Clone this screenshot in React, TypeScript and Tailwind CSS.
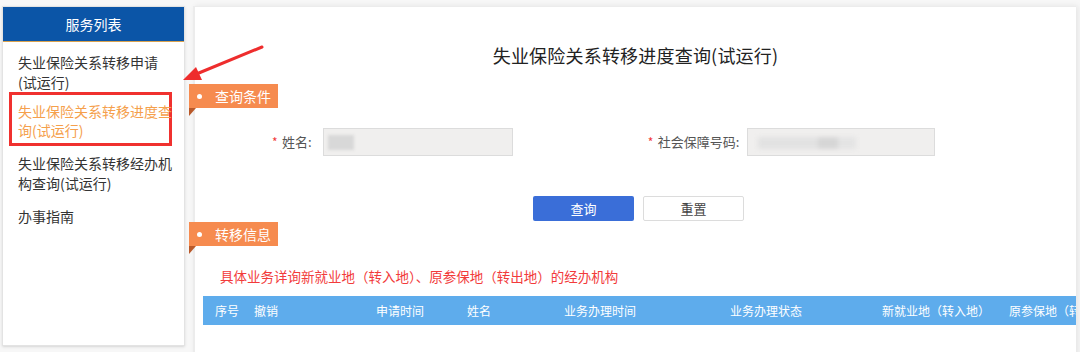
import React from 'react';

const font = { fontFamily: '"Microsoft YaHei", "Noto Sans CJK SC", "Noto Sans", sans-serif' };

function Tag({ label }: { label: string }) {
    return (
        <div className="relative -ml-[6px] w-[89px]">
            <div className="h-[24px] bg-[#f68b4f] flex items-center pl-[8px]">
                <span className="w-[5px] h-[5px] rounded-full bg-white" />
                <span className="ml-[13px] text-[14px] text-white leading-none">{label}</span>
            </div>
            {/* ribbon fold */}
            <div className="w-0 h-0 border-l-[7px] border-l-transparent border-t-[8px] border-t-[#b9592a] -scale-x-100" />
        </div>
    );
}

function Field({ label, width, gap, blur }: { label: string; width: string; gap: string; blur: React.ReactNode }) {
    return (
        <div className="flex items-center">
            <span className="text-[#f23a3a] text-[12px] w-[10px]">*</span>
            <span className="text-[13px] text-[#555]">{label}</span>
            <div className={`h-[28px] bg-[#f0efee] border border-[#dcdcdc] relative overflow-hidden ${gap} ${width}`}>
                {blur}
            </div>
        </div>
    );
}

const cols: { t: string; w: string }[] = [
    { t: '序号', w: 'w-[51px] pl-[12px]' },
    { t: '撤销', w: 'w-[122px]' },
    { t: '申请时间', w: 'w-[91px]' },
    { t: '姓名', w: 'w-[97px]' },
    { t: '业务办理时间', w: 'w-[166px]' },
    { t: '业务办理状态', w: 'w-[152px]' },
    { t: '新就业地（转入地）', w: 'w-[127px]' },
    { t: '原参保地（转出地）', w: 'w-[130px]' },
];

export default function App() {
    return (
        <div className="relative w-[1080px] h-[352px] overflow-hidden bg-[#f7f7f7] flex" style={font}>
            {/* Sidebar */}
            <div className="ml-[2px] mt-[6px] w-[183px] h-[340px] bg-white border border-[#e3e3e3] shadow-sm shrink-0">
                <div className="h-[35px] bg-[#0b55a7] border-b border-[#d9a24f] flex items-center justify-center text-white text-[14px]">
                    服务列表
                </div>
                <div className="pt-[10px] text-[14px] leading-[20px] text-[#333]">
                    <div className="pl-[15px]">
                        失业保险关系转移申请
                        <br />
                        (试运行)
                    </div>
                    <div className="ml-[6px] w-[163px] border-[3px] border-[#f0312f] pl-[6px] pt-[7px] pb-[3px] leading-[19px] text-[#f5a04c] whitespace-nowrap">
                        失业保险关系转移进度查
                        <br />
                        询(试运行)
                    </div>
                    <div className="mt-[7px] pl-[15px] whitespace-nowrap">
                        失业保险关系转移经办机
                        <br />
                        构查询(试运行)
                    </div>
                    <div className="mt-[13px] pl-[15px]">办事指南</div>
                </div>
            </div>

            {/* Main panel */}
            <div className="ml-[8px] mt-[6px] w-[883px] h-[360px] bg-white border-l-2 border-t border-[#ececec] shadow-[2px_0_6px_rgba(0,0,0,0.08)] shrink-0">
                <div className="h-[77px] pt-[36px] flex justify-center">
                    <h1 className="text-[18px] leading-[24px] text-[#222] tracking-[0.2px]">失业保险关系转移进度查询(试运行)</h1>
                </div>

                <Tag label="查询条件" />

                <div className="mt-[12px] flex items-center pl-[77px]">
                    <Field
                        label="姓名:"
                        gap="ml-[11px]"
                        width="w-[190px]"
                        blur={<div className="absolute left-[4px] top-[6px] w-[26px] h-[15px] bg-[#d8d8d8] blur-[1.5px]" />}
                    />
                    <div className="ml-[135px]">
                        <Field
                            label="社会保障号码:"
                            gap="ml-[8px]"
                            width="w-[188px]"
                            blur={
                                <div className="absolute left-[10px] top-[8px] flex blur-[2px]">
                                    <div className="w-[60px] h-[12px] bg-[#e2e2e2]" />
                                    <div className="w-[20px] h-[12px] bg-[#d6d6d6]" />
                                    <div className="w-[18px] h-[12px] bg-[#e4e4e4]" />
                                </div>
                            }
                        />
                    </div>
                </div>

                <div className="mt-[40px] flex pl-[338px] gap-[9px]">
                    <button className="w-[101px] h-[25px] bg-[#3a6ed8] text-white text-[13px] rounded-[2px]">查询</button>
                    <button className="w-[101px] h-[25px] bg-white border border-[#dcdcdc] text-[#444] text-[13px] rounded-[2px]">
                        重置
                    </button>
                </div>

                <div className="mt-[1px]">
                    <Tag label="转移信息" />
                </div>

                <div className="mt-[12px] pl-[25px] text-[13.5px] text-[#f23b3b] leading-[20px]">
                    具体业务详询新就业地（转入地）、原参保地（转出地）的经办机构
                </div>

                <div className="mt-[10px] ml-[8px] h-[29px] bg-[#5eacec] flex items-center text-white text-[12px] overflow-hidden whitespace-nowrap">
                    {cols.map((c, i) => (
                        <div key={i} className={`${c.w} shrink-0`}>
                            {c.t}
                        </div>
                    ))}
                </div>
            </div>

            {/* Annotation arrow */}
            <svg className="absolute left-0 top-0 pointer-events-none" width="1080" height="352">
                <line x1="262" y1="47" x2="194" y2="75" stroke="#ee2d2d" strokeWidth="3" strokeLinecap="round" />
                <polygon points="183,80 196,67 202,80" fill="#ee2d2d" />
            </svg>
        </div>
    );
}
